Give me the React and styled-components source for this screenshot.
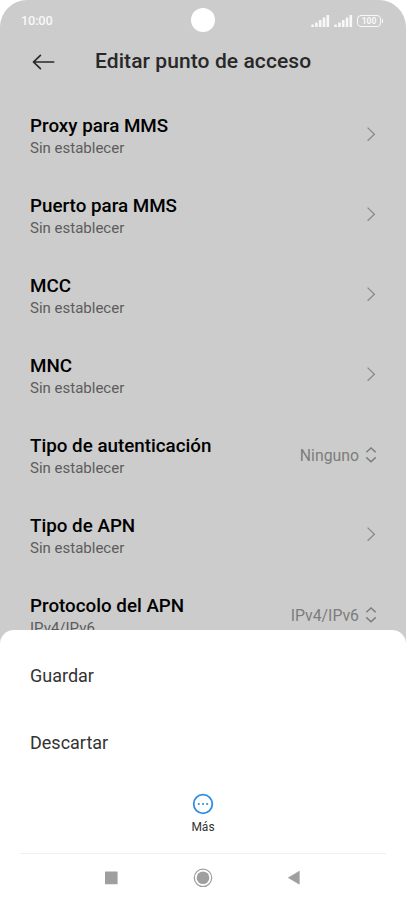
import React, { useState } from 'react';
import styled, { createGlobalStyle } from 'styled-components';

const GlobalStyle = createGlobalStyle`
  * {
    box-sizing: border-box;
  }
  body {
    margin: 0;
    background: #fff;
    font-family: Roboto, "Noto Sans", sans-serif;
  }
  svg {
    display: block;
  }
`

const Screen = styled.div`
  position: relative;
  width: 406px;
  height: 902px;
  overflow: hidden;
  border-radius: 27px 27px 0 0;
  background: #ccc;
`

const StatusBar = styled.div`
  display: grid;
  grid-template-columns: 1fr 24px 1fr;
  align-items: center;
  height: 40px;
  padding: 0 21px;
`

const Time = styled.span`
  color: #f8f8f8;
  font-size: 12.8px;
  font-weight: 500;
  line-height: 16px;
  letter-spacing: -0.2px;
  padding-top: 2px;
`

const Camera = styled.div`
  width: 24px;
  height: 24px;
  border-radius: 50%;
  background: #fff;
`

const StatusIcons = styled.div`
  display: flex;
  align-items: center;
  justify-content: flex-end;
  gap: 4px;
  padding: 2px 1px 0 0;
`

const Battery = styled.div`
  position: relative;
  width: 24px;
  height: 12px;
  margin: 0 3px 0 0;
  border: 1px solid #f8f8f8;
  border-radius: 4px;
  color: #f8f8f8;
  font-size: 8.5px;
  font-weight: 700;
  line-height: 11px;
  text-align: center;

  &::after {
    content: "";
    position: absolute;
    top: 3px;
    right: -3px;
    width: 1px;
    height: 4px;
    background: #f8f8f8;
  }
`

const Header = styled.header`
  display: flex;
  align-items: center;
  height: 43px;
  padding-left: 32px;
`

const BackButton = styled.button`
  width: 24px;
  padding: 0;
  border: 0;
  background: none;
`

const Title = styled.h1`
  margin: 0 0 1px 39px;
  color: #282828;
  font-size: 21px;
  font-weight: 500;
  letter-spacing: 0.08px;
  line-height: 24px;
`

const List = styled.div`
  padding-top: 11px;
`

const Row = styled.div`
  display: flex;
  align-items: center;
  justify-content: space-between;
  height: 80px;
  padding: 0 29px 0 30px;
`

const RowLabel = styled.div`
  padding-top: 3px;
`

const RowTitle = styled.div`
  color: #000;
  font-size: 18.8px;
  font-weight: 500;
  line-height: 24px;
`

const RowText = styled.div`
  color: #5c5c5c;
  font-size: 15px;
  line-height: 20px;
`

const RowValue = styled.div`
  display: flex;
  align-items: center;
  gap: 6px;
  padding-top: 2px;
  color: #7d7d7d;
  font-size: 15.8px;
  line-height: 20px;

  span {
    padding-top: 2px;
  }
`

const Sheet = styled.div`
  position: absolute;
  left: 0;
  right: 0;
  bottom: 0;
  height: 272px;
  padding-top: 12px;
  border-radius: 14px 14px 0 0;
  background: #fff;
`

const SheetItem = styled.div`
  display: flex;
  align-items: center;
  height: 67px;
  padding-left: 30px;
  color: #333;
  font-size: 18px;
`

const MoreButton = styled.div`
  display: flex;
  flex-direction: column;
  align-items: center;
  height: 77px;
  padding-top: 17px;
  color: #333;
  font-size: 12px;
  line-height: 14px;
  gap: 5px;
`

const NavBar = styled.nav`
  display: flex;
  align-items: center;
  justify-content: space-between;
  height: 49px;
  margin: 0 20px;
  padding: 0 84px;
  border-top: 1px solid #f0f0f0;
`

const Signal = () => (
  <svg width="19" height="12" viewBox="0 0 19 12" fill="#f8f8f8">
    <rect x="0.3" y="9.5" width="2.6" height="2.5" rx="0.5" />
    <rect x="4.1" y="7.5" width="2.6" height="4.5" rx="0.5" />
    <rect x="7.9" y="5" width="2.6" height="7" rx="0.5" />
    <rect x="11.7" y="2.5" width="2.6" height="9.5" rx="0.5" />
    <rect x="15.5" y="0" width="2.6" height="12" rx="0.5" />
  </svg>
)

const BackArrow = () => (
  <svg width="24" height="16" viewBox="0 0 24 16" fill="none" stroke="#282828" strokeWidth="1.7" strokeLinecap="round">
    <path d="M1.6 8H21.6M8.4 1.4L1.6 8L8.4 14.6" />
  </svg>
)

const Chevron = () => (
  <svg width="12" height="16" viewBox="0 0 12 16" fill="none" stroke="#8a8a8a" strokeWidth="1.3">
    <path d="M2.6 1.6L9.4 8.2L2.6 14.8" />
  </svg>
)

const UpDown = () => (
  <svg width="12" height="16" viewBox="0 0 12 16" fill="none" stroke="#7d7d7d" strokeWidth="1.5">
    <path d="M1.3 5.3L6 1L10.7 5.3M1.3 10.4L6 14.7L10.7 10.4" />
  </svg>
)

const MoreIcon = () => (
  <svg width="22" height="22" viewBox="0 0 22 22">
    <circle cx="11" cy="11" r="9.3" fill="none" stroke="#2f8de4" strokeWidth="1.8" />
    <g fill="#2f8de4">
      <circle cx="6.8" cy="11" r="1.1" />
      <circle cx="11" cy="11" r="1.1" />
      <circle cx="15.2" cy="11" r="1.1" />
    </g>
  </svg>
)

const RecentsIcon = () => (
  <svg width="14" height="14" viewBox="0 0 14 14">
    <rect x="1" y="0.6" width="12.6" height="12.6" rx="0.5" fill="#9f9f9f" />
  </svg>
)

const HomeIcon = () => (
  <svg width="20" height="20" viewBox="0 0 20 20">
    <circle cx="10" cy="9.8" r="8.7" fill="none" stroke="#9f9f9f" strokeWidth="1.2" />
    <circle cx="10" cy="9.8" r="6.3" fill="#9f9f9f" />
  </svg>
)

const PreviousIcon = () => (
  <svg width="14" height="16" viewBox="0 0 14 16">
    <path d="M0.3 7.7L11.3 1.2V14.2Z" fill="#9f9f9f" stroke="#9f9f9f" strokeWidth="0.6" strokeLinejoin="round" />
  </svg>
)

const settings = [
  { title: 'Proxy para MMS', text: 'Sin establecer' },
  { title: 'Puerto para MMS', text: 'Sin establecer' },
  { title: 'MCC', text: 'Sin establecer' },
  { title: 'MNC', text: 'Sin establecer' },
  { title: 'Tipo de autenticación', text: 'Sin establecer', value: 'Ninguno' },
  { title: 'Tipo de APN', text: 'Sin establecer' },
  { title: 'Protocolo del APN', text: 'IPv4/IPv6', value: 'IPv4/IPv6' },
]

const App = () => {
  const [menuOpen, setMenuOpen] = useState(true);

  const closeMenu = () => {
    setMenuOpen(false);
  }

  return (
    <>
      <GlobalStyle />
      <Screen>
        <StatusBar>
          <Time>10:00</Time>
          <Camera />
          <StatusIcons>
            <Signal />
            <Signal />
            <Battery>100</Battery>
          </StatusIcons>
        </StatusBar>
        <Header>
          <BackButton><BackArrow /></BackButton>
          <Title>Editar punto de acceso</Title>
        </Header>
        <List>
          {settings.map(item => (
            <Row key={item.title}>
              <RowLabel>
                <RowTitle>{item.title}</RowTitle>
                <RowText>{item.text}</RowText>
              </RowLabel>
              {item.value ? <RowValue><span>{item.value}</span><UpDown /></RowValue> : <Chevron />}
            </Row>
          ))}
        </List>
        {menuOpen && (
          <Sheet>
            <SheetItem onClick={closeMenu}>Guardar</SheetItem>
            <SheetItem onClick={closeMenu}>Descartar</SheetItem>
            <MoreButton>
              <MoreIcon />
              Más
            </MoreButton>
            <NavBar>
              <RecentsIcon />
              <HomeIcon />
              <PreviousIcon />
            </NavBar>
          </Sheet>
        )}
      </Screen>
    </>
  )
}

export default App;
